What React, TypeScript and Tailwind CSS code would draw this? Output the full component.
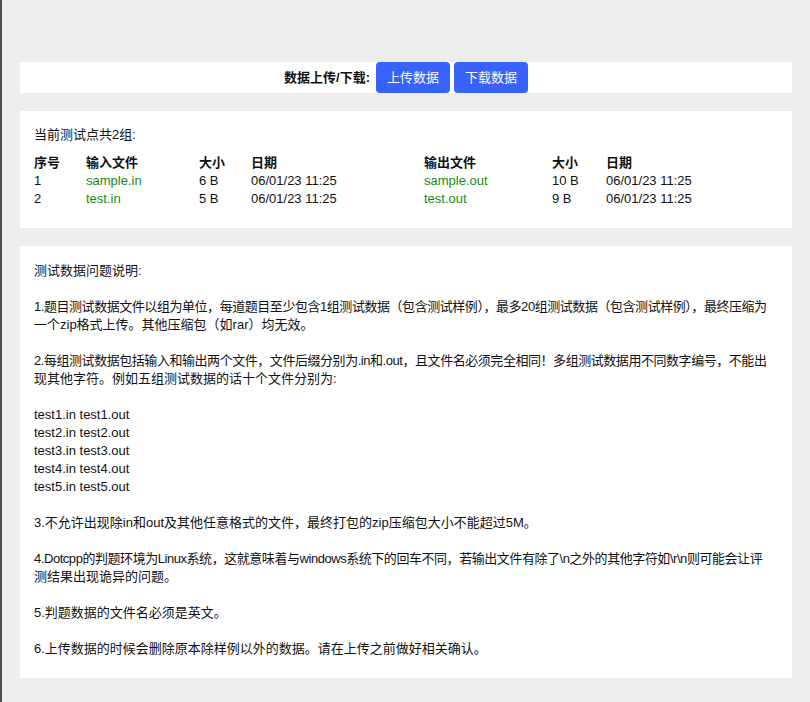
import React from 'react'

const files = [
  { id: 1, inName: 'sample.in', inSize: '6 B', inDate: '06/01/23 11:25', outName: 'sample.out', outSize: '10 B', outDate: '06/01/23 11:25' },
  { id: 2, inName: 'test.in', inSize: '5 B', inDate: '06/01/23 11:25', outName: 'test.out', outSize: '9 B', outDate: '06/01/23 11:25' },
]

const cols = 'grid grid-cols-[52px_113px_52px_173px_128px_54px_1fr]'

export default function App() {
  return (
    <div
      className="min-h-[702px] bg-[#ededed] border-l-2 border-[#4d4d4d] pt-[62px] pb-[25px] pl-[18px] pr-[18px] text-[13px] leading-[18px] text-[#111]"
      style={{ fontFamily: '"Liberation Sans", Arial, "Noto Sans CJK SC", sans-serif' }}
    >
      {/* upload / download bar */}
      <div className="bg-white h-[31px] flex items-center justify-center gap-[4px]">
        <span className="font-bold mr-[2px]">数据上传/下载:</span>
        <button className="h-[31px] w-[74px] rounded-[4px] bg-[#3762fb] text-white text-[13px]">上传数据</button>
        <button className="h-[31px] w-[74px] rounded-[4px] bg-[#3762fb] text-white text-[13px]">下载数据</button>
      </div>

      {/* test point list */}
      <div className="bg-white mt-[18px] px-[14px] pt-[15px] pb-[20px]">
        <p className="mb-[10px]">当前测试点共2组:</p>
        <div className={cols + ' font-bold'}>
          <span>序号</span>
          <span>输入文件</span>
          <span>大小</span>
          <span>日期</span>
          <span>输出文件</span>
          <span>大小</span>
          <span>日期</span>
        </div>
        {files.map((f) => (
          <div key={f.id} className={cols}>
            <span>{f.id}</span>
            <span className="text-[#168a16]">{f.inName}</span>
            <span>{f.inSize}</span>
            <span>{f.inDate}</span>
            <span className="text-[#168a16]">{f.outName}</span>
            <span>{f.outSize}</span>
            <span>{f.outDate}</span>
          </div>
        ))}
      </div>

      {/* notes */}
      <div className="bg-white mt-[18px] px-[14px] pt-[16px] pb-[20px] whitespace-nowrap">
        <p>测试数据问题说明:</p>
        <br />
        <p className="tracking-[-0.45px]">1.题目测试数据文件以组为单位，每道题目至少包含1组测试数据（包含测试样例），最多20组测试数据（包含测试样例），最终压缩为</p>
        <p>一个zip格式上传。其他压缩包（如rar）均无效。</p>
        <br />
        <p className="tracking-[-0.45px]">2.每组测试数据包括输入和输出两个文件，文件后缀分别为.in和.out，且文件名必须完全相同！多组测试数据用不同数字编号，不能出</p>
        <p>现其他字符。例如五组测试数据的话十个文件分别为:</p>
        <br />
        <p>test1.in test1.out</p>
        <p>test2.in test2.out</p>
        <p>test3.in test3.out</p>
        <p>test4.in test4.out</p>
        <p>test5.in test5.out</p>
        <br />
        <p>3.不允许出现除in和out及其他任意格式的文件，最终打包的zip压缩包大小不能超过5M。</p>
        <br />
        <p className="tracking-[-0.45px]">4.Dotcpp的判题环境为Linux系统，这就意味着与windows系统下的回车不同，若输出文件有除了\n之外的其他字符如\r\n则可能会让评</p>
        <p>测结果出现诡异的问题。</p>
        <br />
        <p>5.判题数据的文件名必须是英文。</p>
        <br />
        <p>6.上传数据的时候会删除原本除样例以外的数据。请在上传之前做好相关确认。</p>
      </div>
    </div>
  )
}
